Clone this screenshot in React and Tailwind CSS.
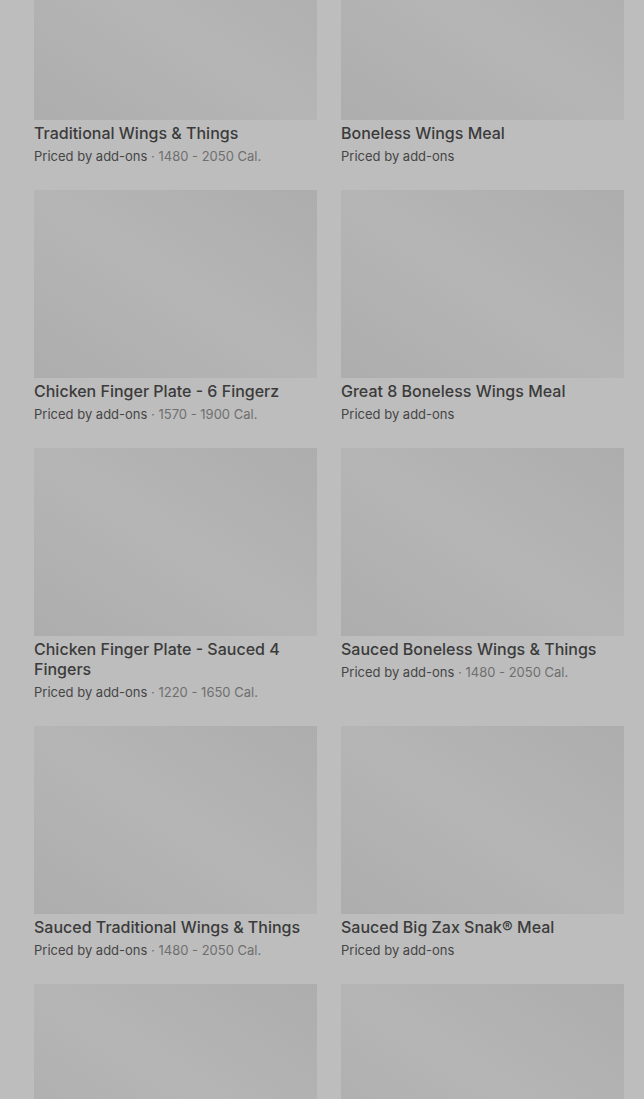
const items = [
  { name: 'Traditional Wings & Things', cal: '1480 - 2050 Cal.' },
  { name: 'Boneless Wings Meal' },
  { name: 'Chicken Finger Plate - 6 Fingerz', cal: '1570 - 1900 Cal.' },
  { name: 'Great 8 Boneless Wings Meal' },
  { name: 'Chicken Finger Plate - Sauced 4 Fingers', cal: '1220 - 1650 Cal.' },
  { name: 'Sauced Boneless Wings & Things', cal: '1480 - 2050 Cal.' },
  { name: 'Sauced Traditional Wings & Things', cal: '1480 - 2050 Cal.' },
  { name: 'Sauced Big Zax Snak® Meal' },
  {},
  {},
]

function Card({ item }) {
  return (
    <div className="flex flex-col">
      <div className="h-[188px] bg-gradient-to-tr from-[#adadad] via-[#b5b5b5] to-[#adadad]" />
      {item.name && (
        <>
          <div className="pt-[3px] text-[16px] leading-5 font-medium text-[#3b3b3b]">{item.name}</div>
          <div className="mt-[3px] text-[13px] leading-5 text-[#454545]">
            Priced by add-ons
            {item.cal && <span className="text-[#6f6f6f]"> · {item.cal}</span>}
          </div>
        </>
      )}
    </div>
  )
}

export default function App() {
  return (
    <div className="h-[1099px] overflow-hidden bg-[#bdbdbd]" style={{ fontFamily: 'Inter, "Noto Sans", sans-serif' }}>
      <div className="mt-[-68px] grid grid-cols-2 gap-x-6 gap-y-6 pl-[34px] pr-5">
        {items.map((item, i) => (
          <Card key={i} item={item} />
        ))}
      </div>
    </div>
  )
}
